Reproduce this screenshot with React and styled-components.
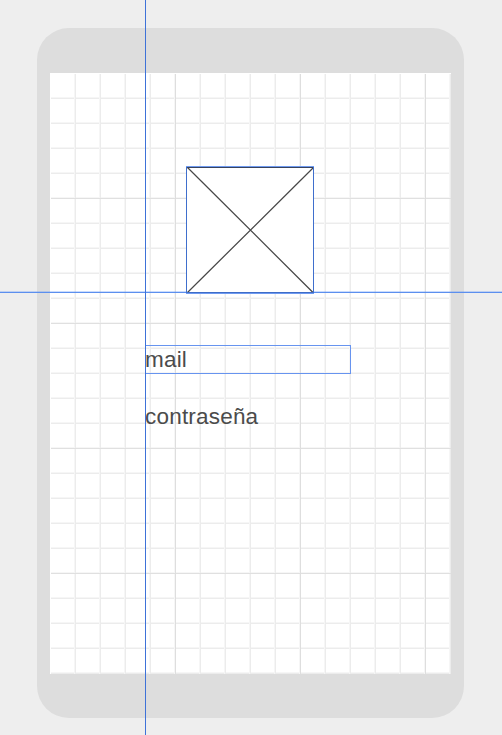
import React from "react";
import styled, { createGlobalStyle } from "styled-components";

const GlobalStyle = createGlobalStyle`
  html, body, #root { margin: 0; height: 100%; }
  body { background: #eeeeee; overflow: hidden; }
`;

const Canvas = styled.main`
  position: relative;
  display: flex;
  box-sizing: border-box;
  width: 502px;
  height: 735px;
  padding: 28px 38px 17px 37px;
  background: #eeeeee;
  overflow: hidden;
  font-family: "Liberation Sans", Arial, sans-serif;
`;

const Device = styled.section`
  display: flex;
  flex: 1;
  box-sizing: border-box;
  padding: 45px 13px 44px;
  border-radius: 32px;
  background: #dddddd;
`;

const Screen = styled.div`
  display: flex;
  flex: 1;
  flex-direction: column;
  align-items: center;
  gap: 51px;
  box-sizing: border-box;
  padding-top: 93px;
  background-color: #ffffff;
  background-image:
    linear-gradient(#ffffff, #ffffff),
    linear-gradient(#ffffff, #ffffff),
    linear-gradient(to right, #dedede 1px, transparent 1px),
    linear-gradient(to bottom, #e0e0e0 1px, transparent 1px),
    linear-gradient(to right, #ececec 1px, transparent 1px, transparent 24px, #f6f6f6 24px),
    linear-gradient(to bottom, #ececec 1px, transparent 1px, transparent 24px, #f6f6f6 24px);
  background-size: 1px 100%, 100% 1px, 125px 100%, 100% 125px, 25px 100%, 100% 25px;
  background-repeat: no-repeat, no-repeat, repeat, repeat, repeat, repeat;
`;

const ImagePlaceholder = styled.svg`
  position: relative;
  z-index: 1;
  flex: none;
  width: 128px;
  height: 128px;
  margin-right: 1px;
`;

const Fields = styled.div`
  display: flex;
  flex-direction: column;
  align-self: flex-start;
  gap: 28px;
  margin-left: 95px;
`;

const Field = styled.div`
  box-sizing: border-box;
  width: 206px;
  height: 29px;
  outline: ${({ $selected }) => ($selected ? "1px solid #6794ef" : "none")};
  outline-offset: -1px;
  color: #4b4b4b;
  font-size: 22.5px;
  letter-spacing: 0.2px;
  line-height: 29px;
  white-space: nowrap;
`;

const VerticalGuide = styled.div`
  position: absolute;
  left: 145px;
  top: 0;
  width: 1px;
  height: 100%;
  background: #3e72d8;
`;

const HorizontalGuide = styled.div`
  position: absolute;
  left: 0;
  top: 291px;
  width: 100%;
  height: 2px;
  background: linear-gradient(rgba(80, 140, 250, 0.3) 50%, #5c8fee 50%);
`;

export default function App() {
  return (
    <>
      <GlobalStyle />
      <Canvas>
        <Device>
          <Screen>
            <ImagePlaceholder viewBox="0 0 128 128" aria-label="Image placeholder">
              <rect width="128" height="128" fill="#fff" />
              <path d="M1.5 1.5 127 126.5M127.5 1.5 1.5 126.5" stroke="#484848" strokeWidth="1.25" />
              <g shapeRendering="crispEdges">
                <path d="M0 .5H128M0 127.5H128" stroke="#6f9af0" />
                <path d="M1 1.5H127" stroke="#37435f" />
                <path d="M0 126.5H128" stroke="#3e6cc8" />
                <path d="M.5 1V127M127.5 1V127" stroke="#3f6fcd" />
              </g>
            </ImagePlaceholder>
            <Fields>
              <Field $selected>mail</Field>
              <Field>contraseña</Field>
            </Fields>
          </Screen>
        </Device>
        <HorizontalGuide />
        <VerticalGuide />
      </Canvas>
    </>
  );
}
